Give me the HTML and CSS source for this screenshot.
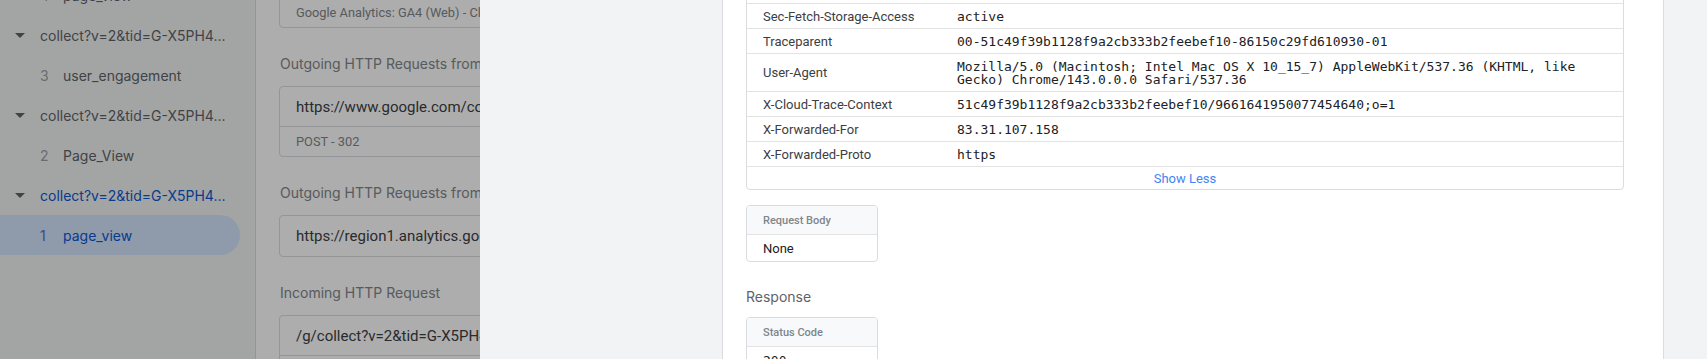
FILE: index.html
```html
<!DOCTYPE html>
<html lang="en">
<head>
<meta charset="utf-8">
<title>Tag Assistant – Request details</title>
<link rel="stylesheet" href="styles.css">
</head>
<body>
<div class="app">
  <aside class="sidebar">
    <ul class="tree">
      <li class="sub"><span class="num">4</span><span class="label">page_view</span></li>
      <li class="parent"><svg class="caret" viewBox="0 0 10 5"><path d="M0 0h10L5 5z"/></svg><span class="text">collect?v=2&amp;tid=G-X5PH4...</span></li>
      <li class="sub"><span class="num">3</span><span class="label">user_engagement</span></li>
      <li class="parent"><svg class="caret" viewBox="0 0 10 5"><path d="M0 0h10L5 5z"/></svg><span class="text">collect?v=2&amp;tid=G-X5PH4...</span></li>
      <li class="sub"><span class="num">2</span><span class="label">Page_View</span></li>
      <li class="parent active"><svg class="caret" viewBox="0 0 10 5"><path d="M0 0h10L5 5z"/></svg><span class="text">collect?v=2&amp;tid=G-X5PH4...</span></li>
      <li class="sub selected"><span class="num">1</span><span class="label">page_view</span></li>
    </ul>
  </aside>

  <main class="middle">
    <div class="stream">
      <div class="card">
        <div class="card-main">GA4 Event - page_view</div>
        <div class="card-foot">Google Analytics: GA4 (Web) - Client</div>
      </div>
      <h3 class="stream-title">Outgoing HTTP Requests from Server</h3>
      <div class="card">
        <div class="card-main">https://www.google.com/collect?v=2&amp;tid=G-X5PH4</div>
        <div class="card-foot">POST - 302</div>
      </div>
      <h3 class="stream-title">Outgoing HTTP Requests from Server</h3>
      <div class="card">
        <div class="card-main single">https://region1.analytics.google.com/g/collect</div>
      </div>
      <h3 class="stream-title">Incoming HTTP Request</h3>
      <div class="card">
        <div class="card-main">/g/collect?v=2&amp;tid=G-X5PH4</div>
        <div class="card-foot">POST - 200</div>
      </div>
    </div>
  </main>

  <div class="scrim"></div>

  <section class="drawer">
    <div class="panel">
      <div class="headers">
        <div class="row"><div class="key">Sec-Fetch-Mode</div><div class="val">no-cors</div></div>
        <div class="row"><div class="key">Sec-Fetch-Site</div><div class="val">cross-site</div></div>
        <div class="row"><div class="key">Sec-Fetch-Storage-Access</div><div class="val">active</div></div>
        <div class="row"><div class="key">Traceparent</div><div class="val">00-51c49f39b1128f9a2cb333b2feebef10-86150c29fd610930-01</div></div>
        <div class="row"><div class="key">User-Agent</div><div class="val">Mozilla/5.0 (Macintosh; Intel Mac OS X 10_15_7) AppleWebKit/537.36 (KHTML, like<br>Gecko) Chrome/143.0.0.0 Safari/537.36</div></div>
        <div class="row"><div class="key">X-Cloud-Trace-Context</div><div class="val">51c49f39b1128f9a2cb333b2feebef10/9661641950077454640;o=1</div></div>
        <div class="row"><div class="key">X-Forwarded-For</div><div class="val">83.31.107.158</div></div>
        <div class="row"><div class="key">X-Forwarded-Proto</div><div class="val">https</div></div>
        <div class="show-less"><button class="link-btn" type="button">Show Less</button></div>
      </div>

      <div class="mini-card body-card">
        <div class="mini-head">Request Body</div>
        <div class="mini-body">None</div>
      </div>

      <h4 class="section-title">Response</h4>

      <div class="mini-card">
        <div class="mini-head">Status Code</div>
        <div class="mini-body mono">200</div>
      </div>
    </div>
  </section>
</div>
</body>
</html>
```

FILE: styles.css
```css
* { box-sizing: border-box; }

body {
  margin: 0;
  width: 1707px;
  height: 359px;
  overflow: hidden;
  font-family: Roboto, "Liberation Sans", sans-serif;
  background: #fff;
}

.app {
  position: relative;
  display: flex;
  height: 359px;
  overflow: hidden;
}

/* ---------- left tree ---------- */
.sidebar {
  width: 256px;
  flex: none;
  background: #f1f3f4;
  border-right: 1px solid #dadce0;
  overflow: hidden;
}

.tree {
  list-style: none;
  margin: -25px 0 0;
  padding: 0;
}

.tree li {
  height: 40px;
  display: flex;
  align-items: center;
  font-family: Inter, "Noto Sans", sans-serif;
  font-size: 14px;
  color: #5f6368;
  white-space: nowrap;
}

.parent { padding-left: 15px; }

.caret {
  width: 10px;
  height: 5px;
  margin-right: 15px;
  fill: #5f6368;
  flex: none;
}

.parent .text {
  overflow: hidden;
  text-overflow: ellipsis;
}

.parent.active { color: #0b57d0; }

.sub { padding-left: 40px; }

.num {
  width: 23px;
  color: #9aa0a6;
}

.sub.selected {
  width: 240px;
  background: #d3e3fd;
  border-radius: 0 20px 20px 0;
  color: #0b57d0;
}

.sub.selected .num { color: #4f74c8; }

/* ---------- middle stream ---------- */
.middle {
  flex: 1;
  min-width: 0;
  background: #fff;
  padding-left: 23px;
  overflow: hidden;
}

.stream {
  width: 900px;
  margin-top: -43px;
}

.card {
  border: 1px solid #dadce0;
  border-radius: 4px;
  background: #fff;
}

.card-main {
  height: 39px;
  display: flex;
  align-items: center;
  padding: 0 16px;
  font-size: 15px;
  color: #3c4043;
  white-space: nowrap;
}

.card-main.single { height: 40px; }

.card-foot {
  height: 30px;
  display: flex;
  align-items: center;
  padding: 0 16px;
  border-top: 1px solid #dadce0;
  font-size: 12.8px;
  color: #80868b;
  white-space: nowrap;
}

.stream-title {
  margin: 26px 0 12px 1px;
  line-height: 20px;
  font-family: Inter, "Noto Sans", sans-serif;
  font-size: 14px;
  font-weight: 400;
  color: #80868b;
  white-space: nowrap;
}

/* ---------- scrim ---------- */
.scrim {
  position: absolute;
  inset: 0;
  background: rgba(0, 0, 0, 0.32);
  z-index: 1;
}

/* ---------- right drawer ---------- */
.drawer {
  position: absolute;
  top: 0;
  right: 0;
  bottom: 0;
  width: 1227px;
  z-index: 2;
  background: #f1f3f4;
  padding: 0 43px 0 242px;
  display: flex;
}

.panel {
  width: 942px;
  background: #fff;
  border-left: 1px solid #dadce0;
  border-right: 1px solid #dadce0;
  padding: 0 23px;
}

.headers {
  width: 878px;
  margin-top: -47px;
  border: 1px solid #dadce0;
  border-radius: 4px;
}

.row {
  display: grid;
  grid-template-columns: 210px 1fr;
  align-items: center;
  border-bottom: 1px solid #e3e3e3;
}

.key,
.val {
  padding: 5.5px 16px;
  line-height: 13px;
}

.key {
  font-size: 13px;
  color: #3c4043;
}

.val {
  padding-left: 0;
  font-family: "DejaVu Sans Mono", "Liberation Mono", monospace;
  font-size: 13px;
  color: #202124;
}

.show-less {
  height: 22px;
  display: flex;
  align-items: center;
  justify-content: center;
}

.link-btn {
  border: 0;
  background: none;
  padding: 0;
  font-family: Roboto, "Liberation Sans", sans-serif;
  font-size: 13px;
  color: #4285f4;
  cursor: pointer;
}

.mini-card {
  width: 132px;
  border: 1px solid #dadce0;
  border-radius: 4px;
  overflow: hidden;
}

.body-card { margin-top: 15px; }

.mini-head {
  height: 29px;
  display: flex;
  align-items: center;
  padding: 0 16px;
  background: #f8f9fa;
  border-bottom: 1px solid #e3e3e3;
  font-size: 11px;
  font-weight: 500;
  color: #80868b;
}

.mini-body {
  height: 26px;
  display: flex;
  align-items: center;
  padding: 0 16px;
  font-size: 13px;
  color: #202124;
}

.mini-body.mono {
  font-family: "DejaVu Sans Mono", "Liberation Mono", monospace;
  font-size: 13px;
}

.section-title {
  margin: 25px 0 10px;
  line-height: 20px;
  font-family: Inter, "Noto Sans", sans-serif;
  font-size: 14px;
  font-weight: 400;
  color: #5f6368;
}
```
